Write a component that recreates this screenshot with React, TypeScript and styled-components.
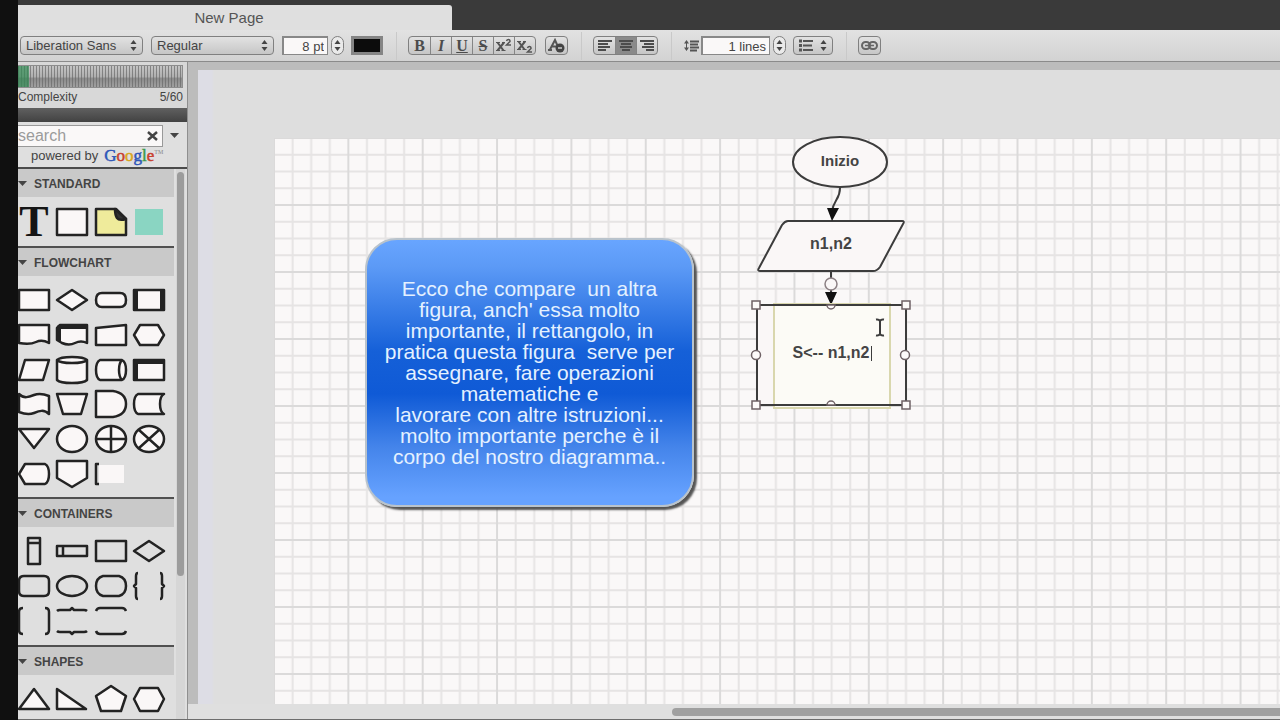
import React from 'react';
import styled, { createGlobalStyle, css } from 'styled-components';

const Global = createGlobalStyle`
  * { box-sizing: border-box; }
  body { margin: 0; overflow: hidden; background: #111; }
  button, input, select { font: inherit; color: inherit; margin: 0; }
`;

const Screen = styled.div`
  display: flex;
  flex-direction: column;
  height: 100vh;
  padding-left: 18px;
  background: #101010;
  color: #444;
  font: 13px/16px "Liberation Sans", Arial, sans-serif;
`;

const TabStrip = styled.header`
  flex: none;
  display: flex;
  align-items: flex-end;
  height: 30px;
  background: #3a3a3a;
`;

const Tab = styled.button`
  width: 434px;
  height: 25px;
  padding: 0 12px 0 0;
  border: 0;
  border-radius: 0 3px 0 0;
  background: #dfdfdf;
  color: #555;
  font-size: 15px;
`;

const Toolbar = styled.div`
  flex: none;
  display: flex;
  align-items: center;
  height: 32px;
  padding-left: 2px;
  border-bottom: 1px solid #8b8b8b;
  background: linear-gradient(#e2e2e2, #d2d2d2);
`;

const control = css`
  height: 19px;
  border: 1px solid #808080;
  border-radius: 4px;
  background: linear-gradient(#e2e2e2, #c6c6c6);
`;

const SelectWrap = styled.label`
  position: relative;
  display: flex;
  margin-right: 8px;
  svg { position: absolute; right: 6px; top: 4px; pointer-events: none; }
`;

const Select = styled.select`
  ${control}
  appearance: none;
  width: 123px;
  padding: 0 20px 0 5px;
  line-height: 16px;
`;

const NumberBox = styled.input<{ $width: number }>`
  width: ${(p) => p.$width}px;
  height: 19px;
  padding: 0 3px;
  border: 2px solid #888;
  border-width: 2px 1px 1px 2px;
  background: #faf8f8;
  text-align: right;
  outline: 0;
`;

const Stepper = styled.button`
  ${control}
  display: flex;
  align-items: center;
  justify-content: center;
  width: 13px;
  margin: 0 7px 0 3px;
  padding: 0;
  border-radius: 7px;
  background: #eaeaea;
`;

const Swatch = styled.button`
  width: 32px;
  height: 19px;
  margin-right: 9px;
  border: 3px solid #858585;
  background: #0c0c0c;
`;

const Divider = styled.span`
  width: 1px;
  height: 28px;
  margin: 0 11px 0 4px;
  background: #c9c9c9;
`;

const Group = styled.div`
  ${control}
  display: flex;
  overflow: hidden;
  margin-right: 9px;
`;

const Tool = styled.button<{ $on?: boolean; $wide?: boolean }>`
  display: flex;
  align-items: center;
  justify-content: center;
  width: ${(p) => (p.$wide ? 38 : 21)}px;
  padding: 0;
  border: 0;
  background: ${(p) => (p.$on ? '#8a8a8a' : 'transparent')};
  & + & { border-left: 1px solid #858585; }
`;

const Glyph = styled.span<{ $italic?: boolean }>`
  color: #4c4c4c;
  font: bold 16px/17px "Liberation Serif", serif;
  font-style: ${(p) => (p.$italic ? 'italic' : 'normal')};
`;

const Main = styled.div`
  flex: 1;
  display: flex;
  min-height: 0;
  border-bottom: 1px solid #6d6d6d;
`;

const Sidebar = styled.aside`
  flex: none;
  display: flex;
  flex-direction: column;
  width: 170px;
  border-right: 1px solid #8f8f8f;
  background: #dfdfdf;
  overflow: hidden;
`;

const Complexity = styled.div`
  flex: none;
  height: 46px;
  padding: 3px 4px 0 0;
  background: #d8d8d8;
  font-size: 12px;
`;

const Meter = styled.div`
  height: 23px;
  border: 1px solid #8d8d8d;
  border-left: 0;
  background:
    linear-gradient(90deg, #2c8a50aa 11px, transparent 11px),
    repeating-linear-gradient(90deg, #666a 0 1px, transparent 1px 3px),
    linear-gradient(#c4c4c4, #b0b0b0 50%, #8c8c8c 60%, #a0a0a0);
`;

const MeterText = styled.div`
  display: flex;
  justify-content: space-between;
  padding-top: 1px;
`;

const DarkBar = styled.div`
  flex: none;
  height: 14px;
  background: linear-gradient(#606060, #424242);
`;

const SearchPanel = styled.div`
  flex: none;
  height: 47px;
  border-bottom: 2px solid #4b4b4b;
`;

const SearchRow = styled.div`
  display: flex;
  align-items: center;
  height: 25px;
  padding-top: 2px;
`;

const SearchBox = styled.div`
  display: flex;
  align-items: center;
  width: 145px;
  height: 22px;
  border: 1px solid #999;
  border-left: 0;
  background: #faf8f8;
`;

const SearchInput = styled.input`
  width: 129px;
  padding: 0;
  border: 0;
  outline: 0;
  background: none;
  font-size: 16px;
  &::placeholder { color: #9b9b9b; opacity: 1; }
`;

const IconButton = styled.button`
  display: flex;
  padding: 0;
  border: 0;
  background: none;
  ${SearchBox} + & { margin-left: 7px; }
`;

const Powered = styled.div`
  display: flex;
  align-items: center;
  gap: 6px;
  padding-left: 13px;
  height: 18px;
`;

const Google = styled.span`
  font: 17px/18px "Liberation Serif", serif;
  sup { color: #888; font-size: 6px; line-height: 0; vertical-align: 7px; }
`;

const Letter = styled.span<{ $c: string }>`
  color: ${(p) => p.$c};
  -webkit-text-stroke: 0.5px ${(p) => p.$c};
`;

const ShapeList = styled.div`
  flex: 1;
  display: flex;
  min-height: 0;
`;

const Sections = styled.div`
  flex: none;
  width: 156px;
  overflow: hidden;
`;

const Section = styled.section`
  & + & { border-top: 2px solid #505050; }
`;

const SectionTitle = styled.h2`
  display: flex;
  align-items: center;
  gap: 7px;
  height: 28px;
  margin: 0;
  padding-top: 1px;
  background: #c9c9c9;
  font-size: 12px;
  font-weight: bold;
`;

const Shapes = styled.div<{ $rows: number; $height: number; $top: number; $bottom: number }>`
  box-sizing: content-box;
  display: grid;
  grid-template-columns: repeat(4, 32px);
  grid-template-rows: repeat(${(p) => p.$rows}, 1fr);
  justify-content: space-between;
  align-items: center;
  height: ${(p) => p.$height}px;
  padding: ${(p) => p.$top}px 9px ${(p) => p.$bottom}px 0;
`;

const ShapeButton = styled.button`
  display: flex;
  padding: 0;
  border: 0;
  background: none;
  svg { overflow: visible; }
`;

const VScroll = styled.div`
  width: 9px;
  margin-left: 2px;
  padding: 3px 1px 0;
  background: #d6d6d6;
`;

const VThumb = styled.div`
  height: 404px;
  border-radius: 4px;
  background: #9c9c9c;
`;

const CanvasPane = styled.main`
  flex: 1;
  display: flex;
  flex-direction: column;
  min-width: 0;
  padding: 8px 0 0 10px;
  background: #bcbcbc;
`;

const Workspace = styled.div`
  flex: 1;
  min-height: 0;
  padding: 68px 0 0 76px;
  overflow: hidden;
  background: linear-gradient(90deg, #dddde5 14px, #dedede 16px);
`;

const Paper = styled.div`
  position: relative;
  height: 100%;
  background: #faf8f8;
`;

const Grid = styled.svg`
  display: block;
  width: 100%;
  height: 100%;
`;

const HScroll = styled.div`
  flex: none;
  height: 15px;
  margin-left: -10px;
  padding: 4px 0 3px 484px;
  background: #dfdfdf;
`;

const HThumb = styled.div`
  height: 8px;
  border-radius: 4px 0 0 4px;
  background: #a0a0a0;
`;

const Callout = styled.div`
  position: absolute;
  left: 91px;
  top: 100px;
  display: flex;
  align-items: center;
  justify-content: center;
  width: 329px;
  height: 269px;
  border: 2px solid #b9c3cc;
  border-radius: 32px;
  background: linear-gradient(#68a5ff, #5c9af6 10%, #1560d8 42%, #0f5ad6 58%, #4484ea 78%, #66a2ff 97%);
  box-shadow: 3px 3px 2px #555;
  color: #e4f1ff;
  font-size: 21px;
  line-height: 21px;
  text-align: center;
  white-space: pre;
`;

const Drawing = styled.svg`
  position: absolute;
  left: 474px;
  top: -8px;
  width: 176px;
  height: 282px;
  pointer-events: none;
`;

const NodeLabel = styled.div<{ $x: number; $y: number; $size: number }>`
  position: absolute;
  left: ${(p) => p.$x}px;
  top: ${(p) => p.$y}px;
  width: 94px;
  font-size: ${(p) => p.$size}px;
  font-weight: bold;
  line-height: 18px;
  text-align: center;
`;

const NodeInput = styled.input`
  position: absolute;
  left: 499px;
  top: 165px;
  width: 118px;
  height: 106px;
  padding: 0 2px 6px 0;
  border: 2px solid #d9d7ae;
  outline: 0;
  background: #fcfbf6;
  font-size: 16px;
  font-weight: bold;
  text-align: center;
`;

const LINE = '#232323';
const FILL = '#faf7f7';

const UpDown = () => (
  <svg width="7" height="11" viewBox="0 0 7 11" fill="#444">
    <path d="M3.5 0L6.500 4H.5zM3.500 11L.5 7H6.500z" />
  </svg>
);

const Down = () => (
  <svg width="9" height="6" viewBox="0 0 9 6" fill="#444"><path d="M0 0h9L4.500 5z" /></svg>
);

const AlignIcon = ({ x }: { x: number[] }) => (
  <svg width="16" height="13" viewBox="0 0 16 13" stroke="#4c4c4c" strokeWidth="2">
    <path d={`M1 2h14M${x[0]} 5h10M${x[1]} 8h12M${x[2]} 11h8`} />
  </svg>
);

type Art = { d?: string; fill?: string; extra?: React.ReactNode; name: string };

const ell = (rx: number, ry: number) => `M${-rx} 0a${rx} ${ry} 0 1 0 ${2 * rx} 0a${rx} ${ry} 0 1 0 ${-2 * rx} 0z`;
const RECT = 'M-15-10H15V10H-15z';
const DIAMOND = 'M-15 0L0-10 15 0 0 10z';

const standard: Art[] = [
  {
    name: 'Text',
    extra: (
      <text x="0" y="14" textAnchor="middle" fill="#151515" stroke="none" fontFamily="Liberation Serif, serif" fontWeight="bold" fontSize="44">T</text>
    ),
  },
  { name: 'Block', d: 'M-15-13H15V13H-15z' },
  {
    name: 'Note',
    d: 'M-15-13H5L15-3V13H-15z',
    fill: '#efeb9b',
    extra: <path d="M4-13L15-3Q8-1 6-4T4-13z" fill="#333" />,
  },
  { name: 'Hotspot', extra: <rect x="-14" y="-13" width="28" height="26" fill="#8ad5c2" stroke="none" /> },
];

const flowchart: Art[] = [
  { name: 'Process', d: RECT },
  { name: 'Decision', d: DIAMOND },
  { name: 'Terminator', d: 'M-9-7H9Q15-7 15 0T9 7H-9Q-15 7-15 0T-9-7z' },
  { name: 'Predefined process', d: RECT, extra: <path d="M-13-10V10M13-10V10" strokeWidth="4" /> },
  { name: 'Document', d: 'M-15-10H15V8Q8 4 2 7T-15 8z' },
  { name: 'Multiple documents', d: 'M-15-7L-12-10H15V8Q9 5 3 8T-10 8L-15 5z', extra: <path d="M-13 6V-8H15" fill="none" strokeWidth="4" /> },
  { name: 'Manual input', d: 'M-15-7L15-10V10H-15z' },
  { name: 'Preparation', d: 'M-15 0L-9-10H9L15 0 9 10H-9z' },
  { name: 'Data', d: 'M-9-10H15L9 10H-15z' },
  { name: 'Database', d: 'M-15-10V10Q-12 13 0 13T15 10V-10Q12-13 0-13T-15-10z', extra: <path d="M-15-10Q-12-7 0-7T15-10" fill="none" /> },
  { name: 'Direct access', d: 'M-11-10H11Q15-8 15 0T11 10H-11Q-15 8-15 0T-11-10z', extra: <path d="M11-10Q8-7 8 0T11 10" fill="none" /> },
  { name: 'Internal storage', d: RECT, extra: <path d="M-13 10V-8H15" fill="none" strokeWidth="4" /> },
  { name: 'Paper tape', d: 'M-15-10C-10-5-5-7 0-9S10-10 15-8V10C10 5 5 7 0 9S-10 10-15 8z' },
  { name: 'Manual operation', d: 'M-15-10H15L9 10H-9z' },
  { name: 'Delay', d: 'M-15-13H2Q15-11 15 0T2 13H-15z' },
  { name: 'Stored data', d: 'M-11-10H15Q11-8 11 0T15 10H-11Q-15 8-15 0T-11-10z' },
  { name: 'Merge', d: 'M-15-10H15L0 9z' },
  { name: 'Connector', d: ell(15, 13) },
  { name: 'Or', d: ell(15, 13), extra: <path d="M-15 0H15M0-13V13" /> },
  { name: 'Summing junction', d: ell(15, 13), extra: <path d="M-10-9L10 9M10-9L-10 9" /> },
  { name: 'Display', d: 'M-15 0L-9-10H11Q15-8 15 0T11 10H-9z' },
  { name: 'Off-page link', d: 'M-15-13H15V4L0 13-15 4z' },
  { name: 'Annotation', extra: <><path d="M-12-9H13V9H-12z" fill={FILL} stroke="none" /><path d="M-12-10H-15V10H-12" fill="none" /></> },
];

const containers: Art[] = [
  { name: 'Vertical lane', d: 'M-6-13H6V13H-6zM-6-8H6', fill: 'none' },
  { name: 'Horizontal lane', d: 'M-15-5H15V5H-15zM-9-5V5', fill: 'none' },
  { name: 'Rectangle container', d: RECT, fill: 'none' },
  { name: 'Diamond container', d: DIAMOND, fill: 'none' },
  { name: 'Rounded container', d: 'M-10-10H10Q15-10 15-5V5Q15 10 10 10H-10Q-15 10-15 5V-5Q-15-10-10-10z', fill: 'none' },
  { name: 'Ellipse container', d: ell(15, 10), fill: 'none' },
  { name: 'Pill container', d: 'M-8-10H8Q15-8 15 0T8 10H-8Q-15 8-15 0T-8-10z', fill: 'none' },
  { name: 'Braces', d: 'M-11-13Q-13-13-13-10V-2L-15 0-13 2V10Q-13 13-11 13M11-13Q13-13 13-10V-2L15 0 13 2V10Q13 13 11 13', fill: 'none' },
  { name: 'Brackets', d: 'M-11-13Q-15-13-15-9V9Q-15 13-11 13M11-13Q15-13 15-9V9Q15 13 11 13', fill: 'none' },
  { name: 'Horizontal braces', d: 'M-15-10Q-14-11-12-11H-2L0-13 2-11H12Q14-11 15-10M-15 10Q-14 11-12 11H-2L0 13 2 11H12Q14 11 15 10', fill: 'none' },
  { name: 'Horizontal brackets', d: 'M-15-10Q-14-13-11-13H11Q14-13 15-10M-15 10Q-14 13-11 13H11Q14 13 15 10', fill: 'none' },
];

const basic: Art[] = [
  { name: 'Triangle', d: 'M0-10L15 10H-15z' },
  { name: 'Right triangle', d: 'M-15-10L14 10H-15z' },
  { name: 'Pentagon', d: 'M0-13L15-3 10 12H-10L-15-3z' },
  { name: 'Hexagon', d: 'M-15 0L-9-11H9L15 0 9 12H-9z' },
];

const sections = [
  { title: 'STANDARD', items: standard, rows: 1, height: 46, top: 2, bottom: 1 },
  { title: 'FLOWCHART', items: flowchart, rows: 6, height: 208, top: 7, bottom: 6 },
  { title: 'CONTAINERS', items: containers, rows: 3, height: 104, top: 7, bottom: 7 },
  { title: 'SHAPES', items: basic, rows: 1, height: 34, top: 7, bottom: 6 },
];

const message = [
  'Ecco che compare  un altra',
  "figura, anch' essa molto",
  'importante, il rettangolo, in',
  'pratica questa figura  serve per',
  'assegnare, fare operazioni',
  'matematiche e',
  'lavorare con altre istruzioni...',
  'molto importante perche è il',
  'corpo del nostro diagramma..',
].join('\n');

const google: [string, string][] = [
  ['G', '#2d55b8'], ['o', '#c8402f'], ['o', '#d9a520'], ['g', '#2d55b8'], ['l', '#3b9a4a'], ['e', '#c8402f'],
];

export default function App() {
  return (
    <Screen>
      <Global />
      <TabStrip><Tab>New Page</Tab></TabStrip>
      <Toolbar>
        <SelectWrap>
          <Select aria-label="Font"><option>Liberation Sans</option></Select>
          <UpDown />
        </SelectWrap>
        <SelectWrap>
          <Select aria-label="Style"><option>Regular</option></Select>
          <UpDown />
        </SelectWrap>
        <NumberBox $width={46} aria-label="Font size" defaultValue="8 pt" />
        <Stepper aria-label="Change font size"><UpDown /></Stepper>
        <Swatch aria-label="Text colour" />
        <Divider />
        <Group>
          <Tool aria-label="Bold"><Glyph>B</Glyph></Tool>
          <Tool aria-label="Italic"><Glyph as="i" $italic>I</Glyph></Tool>
          <Tool aria-label="Underline"><Glyph as="u">U</Glyph></Tool>
          <Tool aria-label="Strike"><Glyph as="s">S</Glyph></Tool>
          <Tool aria-label="Superscript">
            <svg width="16" height="15" viewBox="0 0 16 15" stroke="#555" fill="none">
              <path d="M1.500 4.500l6 8M8 4.500l-6.500 8" strokeWidth="2" />
              <path d="M0 4.500h4M6 4.500h3M0 12.500h4M5.500 12.500h4" />
              <path d="M10.500 3Q11 1.500 12.500 1.500T14 3.500L10.500 7H15" strokeWidth="1.500" />
            </svg>
          </Tool>
          <Tool aria-label="Subscript">
            <svg width="16" height="15" viewBox="0 0 16 15" stroke="#555" fill="none">
              <path d="M1.500 3.500l6 8M8 3.500l-6.500 8" strokeWidth="2" />
              <path d="M0 3.500h4M6 3.500h3M0 11.500h4M5.500 11.500h4" />
              <path d="M10.500 10Q11 8.500 12.500 8.500T14 10.500L10.500 14H15" strokeWidth="1.500" />
            </svg>
          </Tool>
        </Group>
        <Group>
          <Tool aria-label="Clear formatting">
            <svg width="18" height="15" viewBox="0 0 18 15" stroke="#555" fill="none">
              <path d="M2 11.500L7 2l4 9M4 8.500h5M0 12h4" strokeWidth="2" />
              <circle cx="12" cy="10" r="4.500" fill="#444" stroke="none" />
              <path d="M10 10h4" stroke="#ccc" strokeWidth="1.500" />
            </svg>
          </Tool>
        </Group>
        <Divider />
        <Group>
          <Tool aria-label="Align left"><AlignIcon x={[1, 1, 1]} /></Tool>
          <Tool $on aria-label="Align centre"><AlignIcon x={[3, 2, 4]} /></Tool>
          <Tool aria-label="Align right"><AlignIcon x={[5, 3, 7]} /></Tool>
        </Group>
        <Divider />
        <svg width="18" height="13" viewBox="0 0 18 13">
          <path d="M3.500 1L6 4.500H1zM3.500 12L1 8.500H6zM3 4h1v5H3z" fill="#555" />
          <path d="M7 2.500h9M7 5.500h8M7 8.500h9M7 11.500h7" stroke="#555" strokeWidth="2" />
        </svg>
        <NumberBox $width={69} aria-label="Line spacing" defaultValue="1 lines" />
        <Stepper aria-label="Change line spacing"><UpDown /></Stepper>
        <Group>
          <Tool $wide aria-label="List style">
            <svg width="28" height="13" viewBox="0 0 28 13" stroke="#555" strokeWidth="2">
              <path d="M0 2h3M0 6.500h3M0 11h3" strokeWidth="3" />
              <path d="M4 2h10M4 6.500h9M4 11h10" />
              <path d="M24.500 1l3 4h-6zM24.500 12l3-4h-6z" fill="#444" stroke="none" />
            </svg>
          </Tool>
        </Group>
        <Divider />
        <Group>
          <Tool aria-label="Link">
            <svg width="17" height="11" viewBox="0 0 17 11" fill="none" stroke="#666" strokeWidth="2">
              <rect x="1" y="2" width="8" height="7" rx="3.500" />
              <rect x="8" y="2" width="8" height="7" rx="3.500" />
              <path d="M4 5.500h9" strokeWidth="1.500" />
            </svg>
          </Tool>
        </Group>
      </Toolbar>
      <Main>
        <Sidebar>
          <Complexity>
            <Meter />
            <MeterText><span>Complexity</span><span>5/60</span></MeterText>
          </Complexity>
          <DarkBar />
          <SearchPanel>
            <SearchRow>
              <SearchBox>
                <SearchInput aria-label="Search shapes" placeholder="search" />
                <IconButton aria-label="Clear search">
                  <svg width="11" height="10" viewBox="0 0 11 10" stroke="#444" strokeWidth="2.500"><path d="M1 1l9 8M10 1L1 9" /></svg>
                </IconButton>
              </SearchBox>
              <IconButton aria-label="Search options"><Down /></IconButton>
            </SearchRow>
            <Powered>
              <span>powered by</span>
              <Google>
                {google.map(([ch, c], i) => <Letter key={i} $c={c}>{ch}</Letter>)}
                <sup>TM</sup>
              </Google>
            </Powered>
          </SearchPanel>
          <ShapeList>
            <Sections>
              {sections.map((s) => (
                <Section key={s.title}>
                  <SectionTitle><Down />{s.title}</SectionTitle>
                  <Shapes $rows={s.rows} $height={s.height} $top={s.top} $bottom={s.bottom}>
                    {s.items.map((a) => (
                      <ShapeButton key={a.name} aria-label={a.name}>
                        <svg width="32" height="28" viewBox="-16 -14 32 28" stroke={LINE} strokeWidth="2.500" strokeLinejoin="round">
                          {a.d && <path d={a.d} fill={a.fill ?? FILL} />}
                          {a.extra}
                        </svg>
                      </ShapeButton>
                    ))}
                  </Shapes>
                </Section>
              ))}
            </Sections>
            <VScroll><VThumb /></VScroll>
          </ShapeList>
        </Sidebar>
        <CanvasPane>
          <Workspace>
            <Paper>
              <Grid aria-hidden="true">
                <defs>
                  <pattern id="cells" width="74.350" height="67" patternUnits="userSpaceOnUse" fill="none">
                    <path d="M18.600 0V67M37.200 0V67M55.800 0V67M0 16.750H75M0 33.500H75M0 50.250H75" stroke="#e6e4e4" strokeWidth="2" />
                    <path d="M0 0V67M74.350 0V67M0 0H75M0 67H75" stroke="#dbdada" strokeWidth="2" />
                  </pattern>
                </defs>
                <rect width="100%" height="100%" fill="url(#cells)" />
              </Grid>
              <Callout>{message}</Callout>
              <Drawing viewBox="748 130 176 282" stroke="#3c3c3c" strokeWidth="2" strokeLinejoin="round">
                <ellipse cx="840" cy="162" rx="47" ry="25" fill={FILL} />
                <path d="M788 221H902Q905 221 903 224L880 267Q877 271 873 271H760Q757 271 759 268L782 225Q785 221 788 221z" fill={FILL} />
                <path d="M840 188C840 200 833 200 832 212M831 272V294" fill="none" />
                <path d="M827 208H839L832 221zM825 292H837L831 305z" fill="#111" stroke="none" />
                <circle cx="831" cy="284" r="6" fill={FILL} stroke="#8c8084" strokeWidth="1.500" />
                <rect x="757" y="305" width="149" height="100" fill={FILL} />
              </Drawing>
              <NodeLabel $x={519} $y={14} $size={15}>Inizio</NodeLabel>
              <NodeLabel $x={510} $y={97} $size={16}>n1,n2</NodeLabel>
              <NodeInput aria-label="Shape text" defaultValue="S<-- n1,n2" />
              <Drawing viewBox="748 130 176 282" stroke="#3c3c3c" strokeWidth="2">
                <rect x="757" y="305" width="149" height="100" fill="none" strokeWidth="2" />
                <path d="M871.500 346V361" strokeWidth="1" />
                <g fill="#fdfafa" stroke="#6f6266" strokeWidth="1.500">
                  {[[756, 305], [906, 305], [756, 405], [906, 405]].map(([x, y]) => (
                    <rect key={`${x}-${y}`} x={x - 4} y={y - 4} width="8" height="8" />
                  ))}
                  <circle cx="756" cy="355" r="4.500" />
                  <circle cx="905" cy="355" r="4.500" />
                  <path d="M827 305a4 4 0 0 0 8 0zM827 405a4 4 0 0 1 8 0z" />
                </g>
                <path d="M876 319.500Q879 319 880 321Q881 319 884 319.500M880 321V334M876 335.500Q879 336 880 334Q881 336 884 335.500" fill="none" strokeWidth="2" />
              </Drawing>
            </Paper>
          </Workspace>
          <HScroll><HThumb /></HScroll>
        </CanvasPane>
      </Main>
    </Screen>
  );
}
